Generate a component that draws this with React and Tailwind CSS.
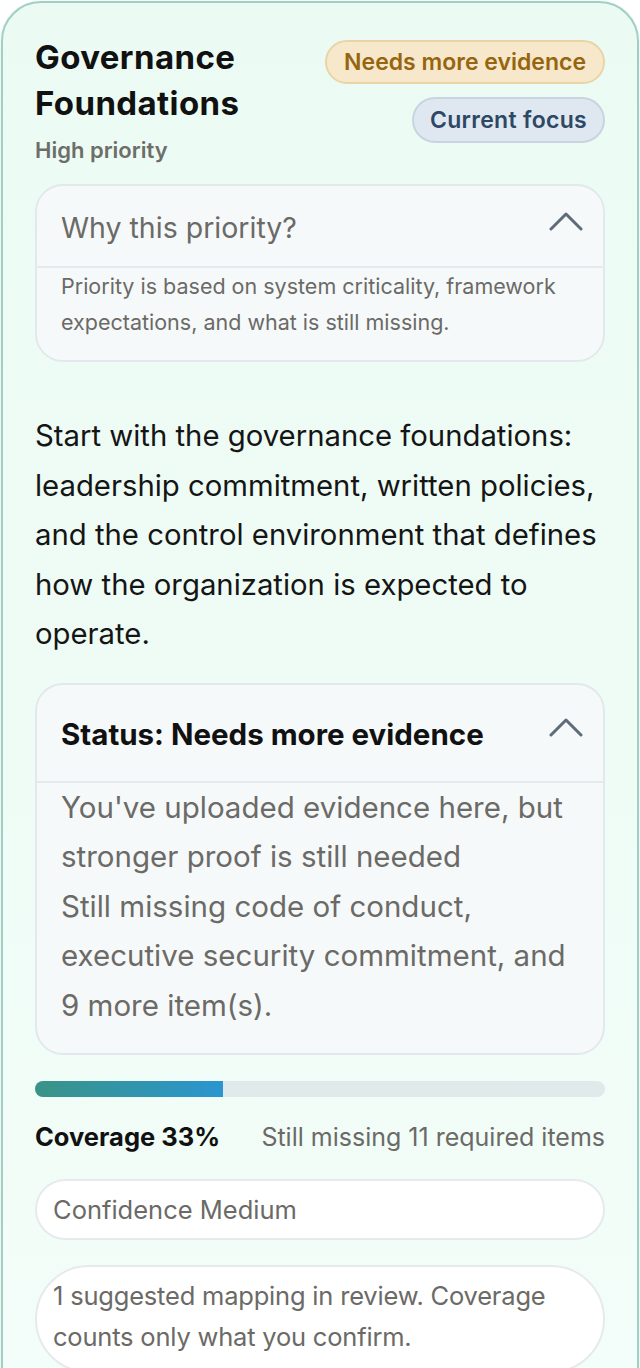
import { useState } from 'react'

function Chevron({ open }) {
  return (
    <svg
      width="34"
      height="21"
      viewBox="0 0 34 21"
      fill="none"
      className={open ? '' : 'rotate-180'}
    >
      <polyline
        points="2,18 17,3 32,18"
        stroke="#5f6b7a"
        strokeWidth="3"
        strokeLinecap="round"
        strokeLinejoin="round"
      />
    </svg>
  )
}

function Section({ title, titleClass, headClass, bodyClass, children }) {
  const [open, setOpen] = useState(true)
  return (
    <div className="rounded-[28px] border-2 border-[#e3e8ed] bg-[#f6f9fa]">
      <button
        onClick={() => setOpen(!open)}
        className={`flex w-full items-start justify-between text-left ${headClass}`}
      >
        <span className={titleClass}>{title}</span>
        <span className="mt-[5px] mr-[-4px]">
          <Chevron open={open} />
        </span>
      </button>
      {open && <div className={`border-t-2 border-[#e5eaee] ${bodyClass}`}>{children}</div>}
    </div>
  )
}

export default function App() {
  return (
    <div className="min-h-[1368px] bg-white p-[1px] font-['Inter','Noto_Sans',sans-serif]">
      <div className="min-h-[1420px] rounded-[40px] border-2 border-[#9ed0c6] bg-gradient-to-b from-[#ebfbf3] to-[#f3fdf9] px-[32px] pt-[31px] shadow-[0_1px_3px_rgba(0,0,0,0.12)]">
        <div className="flex items-start justify-between">
          <div>
            <h2 className="text-[33px] leading-[46px] font-bold tracking-[0.4px] text-[#111]">
              Governance
              <br />
              Foundations
            </h2>
            <p className="mt-[10px] text-[22px] leading-[28px] font-semibold text-[#6d6d69]">
              High priority
            </p>
          </div>
          <div className="flex flex-col items-end gap-[13px] pt-[6px]">
            <span className="rounded-full border-2 border-[#e9d4a6] bg-[#f7e8cb] px-[17px] py-[6px] text-[23px] leading-[28px] font-semibold text-[#96650f]">
              Needs more evidence
            </span>
            <span className="rounded-full border-2 border-[#c9d4e1] bg-[#dfe7f1] px-[16px] py-[7px] text-[23px] leading-[28px] font-semibold tracking-[0.3px] text-[#2e4864]">
              Current focus
            </span>
          </div>
        </div>

        <div className="mt-[20px]">
          <Section
            title="Why this priority?"
            headClass="px-[24px] pt-[20px] pb-[16px]"
            titleClass="text-[28.5px] leading-[44px] text-[#6b6a66]"
            bodyClass="px-[24px] pb-[20px]"
          >
            <p className="text-[21.5px] leading-[36px] text-[#6b6a66]">
              Priority is based on system criticality, framework expectations, and what is still missing.
            </p>
          </Section>
        </div>

        <p className="mt-[49px] text-[29.3px] leading-[49.5px] text-[#151515]">
          Start with the governance foundations: leadership commitment, written policies, and the control environment that defines how the organization is expected to operate.
        </p>

        <div className="mt-[24px]">
          <Section
            title="Status: Needs more evidence"
            headClass="px-[24px] pt-[27px] pb-[25px]"
            titleClass="text-[29.5px] leading-[44px] font-bold text-[#111]"
            bodyClass="px-[24px] pb-[23px]"
          >
            <p className="text-[29.5px] leading-[49.5px] text-[#6b6a66]">
              You've uploaded evidence here, but stronger proof is still needed
            </p>
            <p className="text-[29.5px] leading-[49.5px] text-[#6b6a66]">
              Still missing code of conduct, executive security commitment, and 9 more item(s).
            </p>
          </Section>
        </div>

        <div className="mt-[26px] h-[16px] w-full overflow-hidden rounded-full bg-[#e0eaeb]">
          <div
            className="h-full bg-gradient-to-r from-[#3a9386] to-[#2b95d0]"
            style={{ width: '33%' }}
          />
        </div>

        <div className="mt-[20px] flex items-center justify-between">
          <span className="text-[25.5px] leading-[40px] font-bold text-[#111]">Coverage 33%</span>
          <span className="text-[25px] leading-[40px] text-[#6b6a66]">
            Still missing 11 required items
          </span>
        </div>

        <div className="mt-[22px] rounded-full border-2 border-[#e6eaed] bg-white px-[16px] py-[8px] text-[25.5px] leading-[41px] text-[#6b6a66]">
          Confidence Medium
        </div>

        <div className="mt-[25px] rounded-[56px] border-2 border-[#e6eaed] bg-white px-[16px] pt-[8px] pb-[14px] text-[25.5px] leading-[41px] tracking-[-0.2px] text-[#6b6a66]">
          1 suggested mapping in review. Coverage counts only what you confirm.
        </div>
      </div>
    </div>
  )
}
